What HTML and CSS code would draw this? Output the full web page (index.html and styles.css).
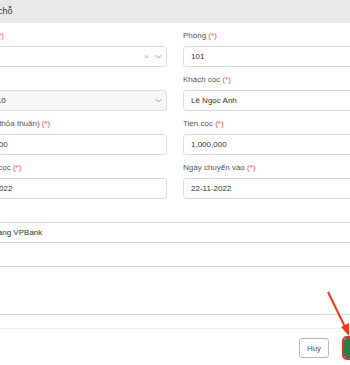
FILE: index.html
```html
<!DOCTYPE html>
<html lang="vi">
<head>
  <meta charset="UTF-8">
  <title>Cọc giữ chỗ</title>
  <link rel="stylesheet" href="styles.css">
</head>
<body>

  <div class="modal">
    <div class="modal-header">Cọc giữ chỗ</div>

    <div class="modal-body">
      <div class="grid">
        <div class="field">
          <label>Tòa nhà <span class="req">(*)</span></label>
          <div class="input select">
            <span class="value"></span>
            <span class="clear">×</span>
            <svg class="chev" width="7" height="5" viewBox="0 0 7 5"><path d="M0.5 1 L3.5 4 L6.5 1" fill="none" stroke="#999" stroke-width="1"/></svg>
          </div>
        </div>
        <div class="field">
          <label>Phòng <span class="req">(*)</span></label>
          <div class="input">101</div>
        </div>

        <div class="field">
          <label>Kỳ hạn</label>
          <div class="input select disabled">
            <span class="value">Tháng 10</span>
            <svg class="chev" width="7" height="5" viewBox="0 0 7 5"><path d="M0.5 1 L3.5 4 L6.5 1" fill="none" stroke="#999" stroke-width="1"/></svg>
          </div>
        </div>
        <div class="field">
          <label>Khách cọc <span class="req">(*)</span></label>
          <div class="input">Lê Ngọc Anh</div>
        </div>

        <div class="field">
          <label>Giá thuê (thỏa thuận) <span class="req">(*)</span></label>
          <div class="input">1,500,000</div>
        </div>
        <div class="field">
          <label>Tiền cọc <span class="req">(*)</span></label>
          <div class="input">1,000,000</div>
        </div>

        <div class="field">
          <label>Ngày đặt cọc <span class="req">(*)</span></label>
          <div class="input">20-11-2022</div>
        </div>
        <div class="field">
          <label>Ngày chuyển vào <span class="req">(*)</span></label>
          <div class="input">22-11-2022</div>
        </div>
      </div>

      <div class="field">
        <label>Hình thức</label>
        <div class="input wide">Ngân hàng VPBank</div>
      </div>

      <div class="field">
        <label>Ghi chú</label>
        <div class="input wide textarea"></div>
      </div>
    </div>

    <div class="modal-footer">
      <button class="btn btn-cancel">Huỷ</button>
      <button class="btn btn-save">Lưu</button>
    </div>
  </div>

  <!-- annotation arrow pointing at the save button -->
  <svg class="arrow" width="350" height="365" viewBox="0 0 350 365">
    <line x1="328" y1="292" x2="346" y2="329" stroke="#f0391e" stroke-width="2"/>
    <path d="M349 336 L341 327 L349 323 Z" fill="#f0391e"/>
  </svg>

</body>
</html>
```

FILE: styles.css
```css
body {
  margin: 0;
  font-family: "Liberation Sans", Arial, sans-serif;
  background: #fff;
  overflow: hidden;
  width: 350px;
  height: 365px;
  position: relative;
}

.modal {
  width: 446px;
  margin-left: -48px;
  background: #fff;
}

.modal-header {
  height: 23px;
  line-height: 23px;
  padding: 0 12px;
  background: #e9e9e9;
  font-size: 9px;
  color: #333;
}

.modal-body {
  padding: 8px 12px 13px;
}

.grid {
  display: grid;
  grid-template-columns: 1fr 1fr;
  column-gap: 16px;
}

.field {
  margin-bottom: 8px;
}

.field:last-child {
  margin-bottom: 0;
}

.field label {
  display: block;
  font-size: 8px;
  line-height: 10px;
  color: #555;
  margin-bottom: 5px;
}

.req {
  color: #ef4a4a;
}

.input {
  height: 21px;
  box-sizing: border-box;
  border: 1px solid #dcdde0;
  border-radius: 3px;
  padding: 0 7px;
  font-size: 8px;
  line-height: 19px;
  color: #333;
  display: flex;
  align-items: center;
}

.select {
  padding-right: 4px;
}

.select .value {
  flex: 1;
}

.select .clear {
  color: #aaa;
  font-size: 8px;
  margin-right: 6px;
}

.disabled {
  background: #f6f6f6;
}

.textarea {
  height: 49px;
}

.modal-footer {
  border-top: 1px solid #f0f0f0;
  padding: 9px 12px;
  display: flex;
  justify-content: flex-end;
  gap: 15px;
}

.btn {
  height: 20px;
  border-radius: 3px;
  font-family: inherit;
  font-size: 8px;
  padding: 0;
}

.btn-cancel {
  width: 30px;
  background: #fff;
  border: 1px solid #b9b9b9;
  color: #555;
}

.btn-save {
  width: 42px;
  background: #2c7d4c;
  border: 1px solid #2c7d4c;
  color: #fff;
  outline: 2px solid #e8321f;
}

.arrow {
  position: absolute;
  left: 0;
  top: 0;
  pointer-events: none;
}
```
